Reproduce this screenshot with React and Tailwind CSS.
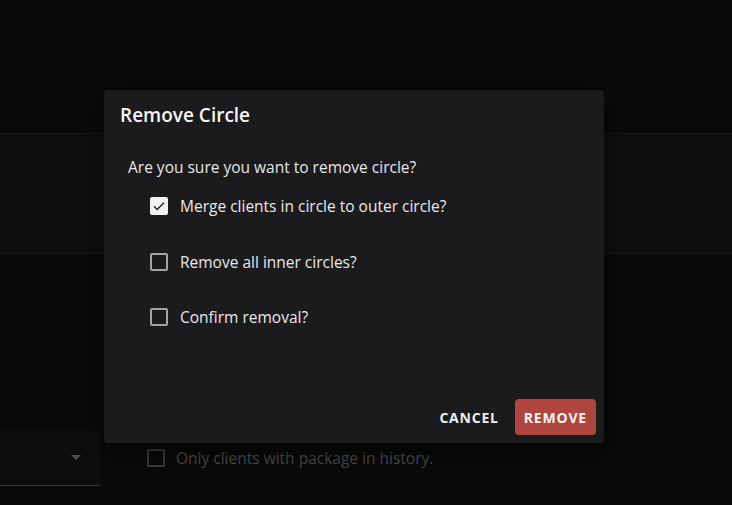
function CheckBox({ checked, dim }) {
  if (checked) {
    return (
      <span className="flex h-[18px] w-[18px] items-center justify-center rounded-[2px] bg-[#f2f2f2]">
        <svg width="14" height="14" viewBox="0 0 24 24" fill="none">
          <path d="M3.5 12.5l5.5 5.5L20.5 6.5" stroke="#1b1b1d" strokeWidth="2.2" />
        </svg>
      </span>
    );
  }
  return (
    <span
      className={
        dim
          ? "block h-[18px] w-[18px] rounded-[2px] border-2 border-[#3d3d3d]"
          : "block h-[18px] w-[18px] rounded-[2px] border-2 border-[#a3a3a3]"
      }
    />
  );
}

function Option({ checked, label }) {
  return (
    <label className="flex h-[18px] items-center gap-3">
      <CheckBox checked={checked} />
      <span className="text-[15.5px] leading-[24px] text-[#e8e8e8]">{label}</span>
    </label>
  );
}

export default function App() {
  return (
    <div
      className="relative h-[505px] w-[732px] overflow-hidden bg-[#0a0a0a]"
      style={{ fontFamily: '"Open Sans", "Noto Sans", sans-serif' }}
    >
      {/* page behind the backdrop */}
      <div className="h-[133px]" />
      <div className="h-[121px] border-y border-[#171718] bg-[#0f0f10]" />
      <div className="mt-[176px] flex items-start">
        <div className="flex h-[56px] w-[100px] items-center justify-end rounded-tr-[4px] border-b border-[#3b3b3b] bg-[#0d0d0d] pr-[19px]">
          <svg width="10" height="5" viewBox="0 0 10 5">
            <path d="M0 0h10L5 5z" fill="#4d4d4d" />
          </svg>
        </div>
        <div className="ml-[47px] mt-[19px] flex h-[18px] items-center gap-[11px]">
          <CheckBox dim />
          <span className="text-[15.5px] leading-[24px] text-[#4e4e4e]">Only clients with package in history.</span>
        </div>
      </div>

      {/* dialog */}
      <div className="absolute left-[104px] top-[90px] flex h-[353px] w-[500px] flex-col rounded-[4px] bg-[#1b1b1d] shadow-[0_8px_30px_rgba(0,0,0,0.6)]">
        <h2 className="px-4 pt-[13px] text-[19px] font-semibold leading-[24px] text-[#f5f5f5]">Remove Circle</h2>
        <p className="ml-6 mt-[28px] text-[15.5px] leading-[24px] text-[#e6e6e6]">Are you sure you want to remove circle?</p>
        <div className="ml-[46px] mt-[18px] flex flex-col gap-[37.5px]">
          <Option checked label="Merge clients in circle to outer circle?" />
          <Option label="Remove all inner circles?" />
          <Option label="Confirm removal?" />
        </div>
        <div className="mt-auto flex items-center justify-end gap-2 px-2 pb-2">
          <button className="h-9 px-[8px] text-[14px] font-bold tracking-[0.8px] text-[#ececec]">CANCEL</button>
          <button className="h-9 rounded-[4px] bg-[#b0443e] px-[9px] text-[14px] font-bold tracking-[0.8px] text-[#f5f5f5]">
            REMOVE
          </button>
        </div>
      </div>
    </div>
  );
}
